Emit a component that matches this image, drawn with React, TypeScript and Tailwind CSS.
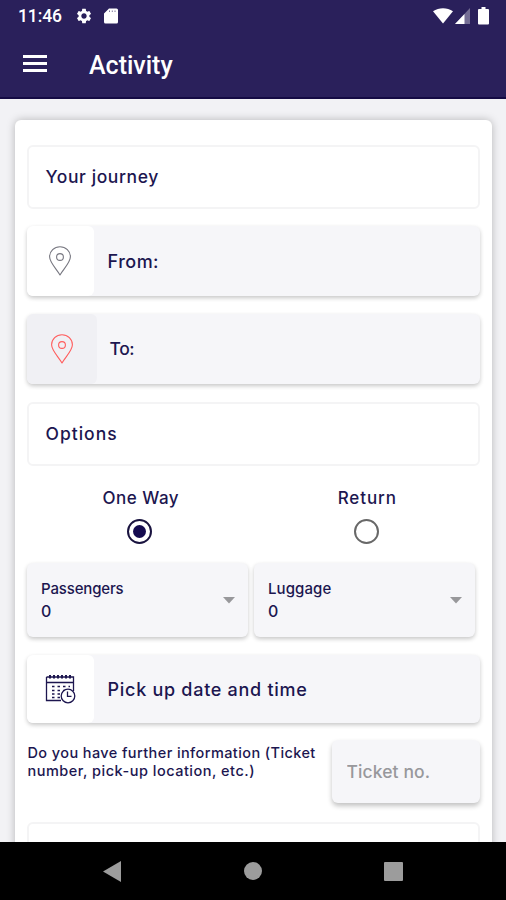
import React from 'react';
import { MdSettings } from 'react-icons/md';

interface LocationRowProps {
    label: string;
    icon: React.ReactNode;
    className?: string;
    iconClassName?: string;
    labelClassName?: string;
}

const PinIcon: React.FC<{ className?: string }> = ({ className = '' }) => (
    <svg
        className={`h-[31px] w-6 ${className}`}
        viewBox="0 0 24 31"
        fill="none"
        stroke="currentColor"
        strokeWidth={1.1}
        strokeLinejoin="round"
    >
        <path d="M12 29C9 23.500 1.600 16.500 1.600 10.700a10.400 10 0 0 1 20.800 0C22.400 16.500 15 23.500 12 29Z" />
        <circle cx="12" cy="11" r="3.400" />
    </svg>
);

const CalendarIcon: React.FC = () => (
    <svg className="h-[31px] w-[31px] text-[#1d164f]" viewBox="0 0 31 31" fill="none" stroke="currentColor">
        <path d="M1.500 3H28.500V17M1.500 3V26.500H16M1.500 8.500H28.500" strokeWidth={1.3} />
        <path d="M5 1V4.500M9 1V4.500M13 1V4.500M17 1V4.500M21 1V4.500M25 1V4.500" strokeWidth={2} />
        <path d="M7 12.500H25M7 16.500H20M7 20H16M7 23.500H15" strokeWidth={1.7} strokeDasharray="2.500 3" />
        <circle cx="23" cy="22" r="6.800" fill="white" strokeWidth={1.3} />
        <path d="M22.500 17.500V22.300H26.500" strokeWidth={1.3} />
    </svg>
);

const StatusBar: React.FC = () => (
    <div className="flex h-8 items-center justify-between pl-[18px] pr-4 text-white">
        <div className="flex items-center">
            <span className="w-[57px] font-[Roboto,sans-serif] text-[17.5px] font-medium leading-8 tracking-[-0.1px]">11:46</span>
            <MdSettings className="h-[18px] w-[18px]" />
            <svg className="ml-[11px] h-4 w-[14px]" viewBox="0 0 14 16">
                <path d="M5 .5H12.500A1.500 1.500 0 0 1 14 2V14A1.500 1.500 0 0 1 12.500 15.500H1.500A1.500 1.500 0 0 1 0 14V5.500Z" fill="currentColor" />
                <path d="M5.500 2.500V4M8.300 2.500V4M11 2.500V4" stroke="#2a205b" strokeWidth={1} opacity="0.6" />
            </svg>
        </div>
        <div className="flex items-center">
            <svg className="h-4 w-5" viewBox="0 0 20 16">
                <path d="M0 3.200C6-.9 14-.9 20 3.200L10 15.500Z" fill="currentColor" />
            </svg>
            <svg className="ml-0.5 h-4 w-[15px]" viewBox="0 0 15 16">
                <path d="M15 0V16H0Z" fill="currentColor" opacity="0.35" />
                <path d="M9.500 5.900V16H0Z" fill="currentColor" />
            </svg>
            <svg className="ml-2 mr-px h-[18px] w-[11px]" viewBox="0 0 11 18">
                <path d="M3.500 0H7.500V2H10A1 1 0 0 1 11 3V16.500A1 1 0 0 1 10 17.500H1A1 1 0 0 1 0 16.500V3A1 1 0 0 1 1 2H3.500Z" fill="currentColor" />
            </svg>
        </div>
    </div>
);

const Header: React.FC = () => (
    <header className="h-[98.5px] shrink-0 border-b-2 border-[#150b44] bg-[#2a205b]">
        <StatusBar />
        <div className="flex h-16 items-center pl-[23px] pt-1 text-white">
            <button className="mb-[5px] flex w-6 flex-col gap-[4px]" aria-label="Menu">
                <span className="h-[3px] w-full bg-white" />
                <span className="h-[3px] w-full bg-white" />
                <span className="h-[3px] w-full bg-white" />
            </button>
            <h1 className="ml-[42px] font-[Roboto,sans-serif] text-[25px] font-medium leading-8">Activity</h1>
        </div>
    </header>
);

const SectionTitle: React.FC<{ title: string; className?: string }> = ({ title, className = '' }) => (
    <div className="flex h-[64px] shrink-0 items-center rounded-md border-2 border-[#f4f4f5] pl-[17px]">
        <h2 className={`text-[17.5px] ${className}`}>{title}</h2>
    </div>
);

const LocationRow: React.FC<LocationRowProps> = ({
    label,
    icon,
    className = '',
    iconClassName = '',
    labelClassName = '',
}) => (
    <div className={`flex shrink-0 overflow-hidden rounded-md bg-[#f6f6f9] shadow-[0_2px_4px_rgba(0,0,0,0.22)] ${className}`}>
        <div className={`flex shrink-0 items-center justify-center rounded-r-md ${iconClassName}`}>{icon}</div>
        <span className={`self-center pt-px ${labelClassName}`}>{label}</span>
    </div>
);

const RadioOption: React.FC<{ label: string; checked?: boolean; className?: string }> = ({
    label,
    checked = false,
    className = '',
}) => (
    <div className="flex flex-1 flex-col items-center">
        <span className={`text-[17px] leading-6 ${className}`}>{label}</span>
        <span
            className={`mt-[9px] flex h-[25px] w-[25px] items-center justify-center rounded-full border-2 ${
                checked ? 'border-[#19133f]' : 'border-[#686868]'
            }`}
        >
            {checked && <span className="h-[13px] w-[13px] rounded-full bg-[#150b50]" />}
        </span>
    </div>
);

const CounterSelect: React.FC<{ label: string; className?: string }> = ({ label, className = '' }) => (
    <div className="flex h-[74px] w-[221px] items-center justify-between rounded-md bg-[#f6f6f9] pl-[14.5px] pr-[13px] shadow-[0_2px_4px_rgba(0,0,0,0.22)]">
        <div className="flex flex-col text-[15px] leading-[22px]">
            <span className={className}>{label}</span>
            <span className="text-base leading-[22px]">0</span>
        </div>
        <svg className="h-[7px] w-3 text-[#98989b]" viewBox="0 0 12 7">
            <path d="M0 0H12L6 6.500Z" fill="currentColor" />
        </svg>
    </div>
);

const NavigationBar: React.FC = () => (
    <nav className="flex h-[58px] shrink-0 items-center bg-black pl-[103px] text-[#9c9c9c]">
        <svg className="h-[21px] w-[18px]" viewBox="0 0 18 21">
            <path d="M18 0V21L0 10.500Z" fill="currentColor" />
        </svg>
        <span className="ml-[123px] h-[18px] w-[18px] rounded-full bg-[#9c9c9c]" />
        <span className="ml-[122px] h-[19px] w-[19px] rounded-[1px] bg-[#9c9c9c]" />
    </nav>
);

const App: React.FC = () => {
    return (
        <div className="flex h-[900px] w-[506px] flex-col overflow-hidden bg-[#f2f2f5] font-[Inter,sans-serif] font-[450] text-[#1c1650]">
            <Header />

            <main className="flex min-h-0 flex-1 flex-col overflow-hidden px-[14.5px] pt-[21.5px]">
                <div className="flex h-[780px] shrink-0 flex-col rounded-md bg-white px-3 pt-[25px] shadow-[0_0_9px_rgba(0,0,0,0.25)]">
                    <SectionTitle title="Your journey" className="tracking-[0.6px]" />

                    <LocationRow
                        label="From:"
                        icon={<PinIcon className="text-[#777780]" />}
                        className="mt-[17px] h-[70px]"
                        iconClassName="w-[67px] bg-white"
                        labelClassName="ml-[14px] text-[18px] tracking-[0.5px]"
                    />
                    <LocationRow
                        label="To:"
                        icon={<PinIcon className="text-[#ff5d5d]" />}
                        className="mt-[18px] h-[70px]"
                        iconClassName="w-[70px] bg-[#f0f0f4]"
                        labelClassName="ml-[13px] text-[17.5px] tracking-[-0.4px]"
                    />

                    <div className="mt-[18px] flex shrink-0 flex-col">
                        <SectionTitle title="Options" className="tracking-[1px]" />
                    </div>

                    <div className="mt-5 flex shrink-0">
                        <RadioOption label="One Way" checked className="pl-[2px] tracking-[0.5px]" />
                        <RadioOption label="Return" className="pl-[2px] tracking-[0.9px]" />
                    </div>

                    <div className="mt-[19px] flex shrink-0 gap-1.5">
                        <CounterSelect label="Passengers" className="tracking-[-0.15px]" />
                        <CounterSelect label="Luggage" className="tracking-[0.1px]" />
                    </div>

                    <LocationRow
                        label="Pick up date and time"
                        icon={<CalendarIcon />}
                        className="mt-[18px] h-[68px]"
                        iconClassName="w-[67px] bg-white"
                        labelClassName="ml-[14px] text-[18px] tracking-[0.72px]"
                    />

                    <div className="mt-[17px] flex h-[63px] shrink-0 justify-between">
                        <p className="pl-px pt-1 text-[14.5px] leading-[18px]">
                            <span className="block whitespace-nowrap tracking-[0.4px]">Do you have further information (Ticket</span>
                            <span className="block whitespace-nowrap tracking-[0.5px]">number, pick-up location, etc.)</span>
                        </p>
                        <input
                            className="h-[63px] w-[148px] shrink-0 rounded-md bg-[#f6f6f9] px-[15px] text-[17.5px] tracking-[0.1px] shadow-[0_3px_5px_rgba(0,0,0,0.24)] outline-none placeholder:text-[#98989c]"
                            placeholder="Ticket no."
                        />
                    </div>

                    <div className="mt-[19px] h-[65px] shrink-0 rounded-md border-2 border-[#f4f4f5]" />
                </div>
            </main>

            <NavigationBar />
        </div>
    );
};

export default App;
